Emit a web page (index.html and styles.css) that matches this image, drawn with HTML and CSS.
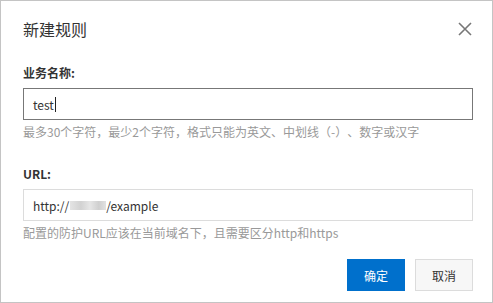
FILE: index.html
```html
<!DOCTYPE html>
<html lang="zh-CN">
<head>
<meta charset="utf-8">
<title>新建规则</title>
<link rel="stylesheet" href="styles.css">
</head>
<body>
<div class="dialog">
  <div class="header">
    <div class="title">新建规则</div>
    <svg class="close" width="14" height="14" viewBox="0 0 14 14"><path d="M1 1L13 13M13 1L1 13" stroke="#777" stroke-width="1.6" fill="none"/></svg>
  </div>
  <div class="field first">
    <div class="label">业务名称:</div>
    <div class="input focused"><span>test</span><span class="caret"></span></div>
    <div class="hint">最多30个字符，最少2个字符，格式只能为英文、中划线（-）、数字或汉字</div>
  </div>
  <div class="field second">
    <div class="label">URL:</div>
    <div class="input"><span>http://</span><span class="blur"></span><span>/example</span></div>
    <div class="hint">配置的防护URL应该在当前域名下，且需要区分http和https</div>
  </div>
  <div class="footer">
    <button class="btn primary">确定</button>
    <button class="btn">取消</button>
  </div>
</div>
</body>
</html>
```
FILE: styles.css
```css
html, body {
  margin: 0;
  padding: 0;
  background: #fff;
}
body {
  font-family: "Noto Sans CJK SC", "Liberation Sans", sans-serif;
  color: #333;
  text-spacing-trim: space-all;
}
.dialog {
  width: 493px;
  height: 303px;
  box-sizing: border-box;
  border: 1px solid #c4c4c4;
  padding: 16px 19px 0 22px;
  display: flex;
  flex-direction: column;
}
.header {
  display: flex;
  justify-content: space-between;
  align-items: center;
  height: 24px;
}
.title {
  font-size: 16px;
  line-height: 24px;
  color: #333;
}
.close {
  margin-right: 1px;
}
.field {
  display: flex;
  flex-direction: column;
}
.field.first {
  margin-top: 23px;
}
.field.second {
  margin-top: 24px;
}
.label {
  font-size: 12px;
  line-height: 18px;
  font-weight: bold;
  color: #333;
}
.input {
  margin-top: 6px;
  height: 32px;
  box-sizing: border-box;
  border: 1px solid #dcdcdc;
  padding: 0 9px;
  display: flex;
  align-items: center;
  font-size: 12px;
  color: #333;
}
.input.focused {
  border-color: #777;
}
.caret {
  display: inline-block;
  width: 1px;
  height: 15px;
  background: #222;
  margin-left: 1px;
}
.blur {
  display: inline-block;
  width: 36px;
  height: 9px;
  margin-left: 1px;
  background: linear-gradient(90deg, #e4e4e4 0%, #d2d2d2 30%, #e6e6e6 55%, #cfcfcf 80%, #e2e2e2 100%);
}
.hint {
  margin-top: 3px;
  font-size: 12px;
  line-height: 18px;
  color: #999;
}
.footer {
  margin-top: 17px;
  display: flex;
  justify-content: flex-end;
  gap: 10px;
}
.btn {
  width: 58px;
  height: 32px;
  box-sizing: border-box;
  border: 1px solid #dcdcdc;
  background: #f7f7f7;
  color: #333;
  font-family: inherit;
  font-size: 12px;
  padding: 0;
}
.btn.primary {
  background: #0070cc;
  border-color: #0070cc;
  color: #fff;
}
```
